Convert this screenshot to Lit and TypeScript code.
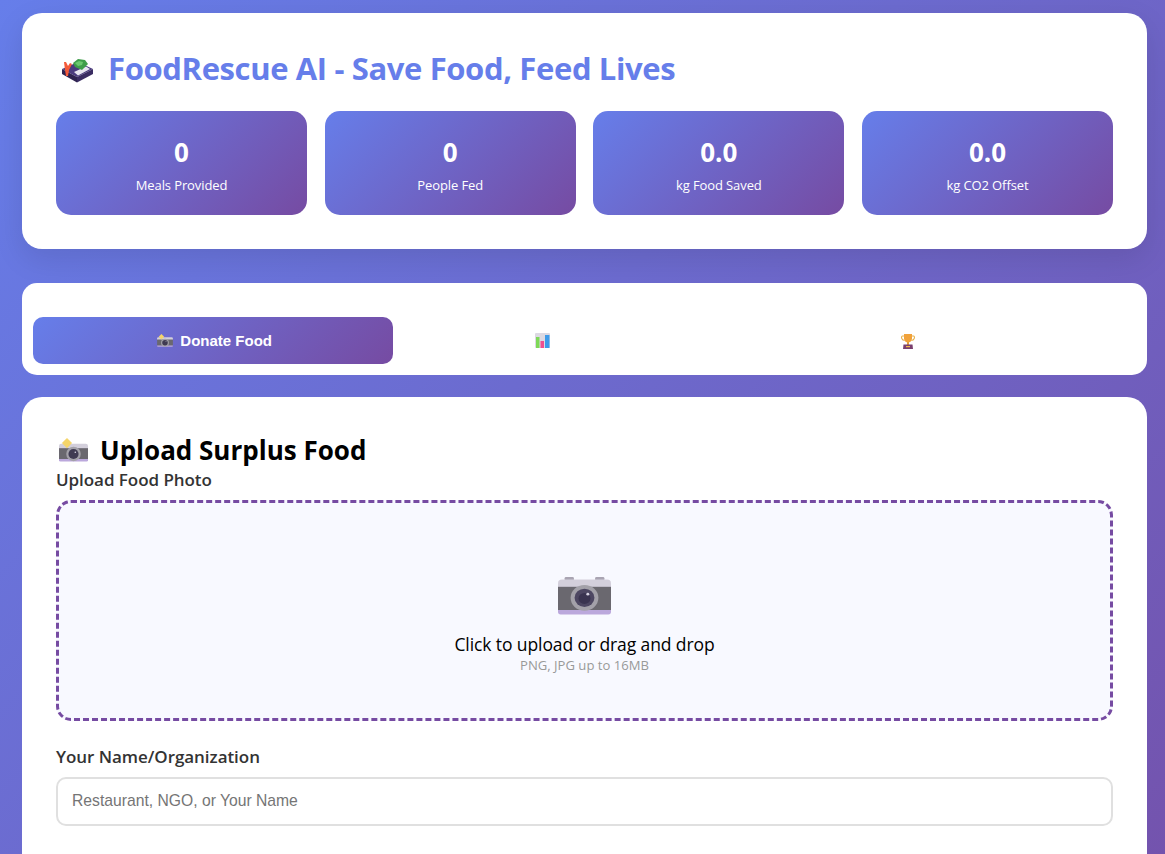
import { LitElement, html, css, svg } from 'lit';
import { customElement } from 'lit/decorators.js';

const bento = svg`
  <path d="M1 11L17 4l15 7-16 8z" fill="#4b3b7e"/>
  <path d="M1 11v5l15 8.500V19z" fill="#2f2350"/>
  <path d="M16 19v5.500L32 16v-5z" fill="#3a2c62"/>
  <path d="M13 14l12-5.500 4 2.500-12 6.500z" fill="#e8e6f0"/>
  <path d="M3 4h2l2 4 2-3 2 1-3 6-1 6H5l-1-6z" fill="#f45a3a"/>
  <path d="M12 5l5-4 7 1 3 4-6 6-7-3z" fill="#3f9e4a"/>
  <path d="M14 5l4-2 4 1-1 3-4 1z" fill="#6cc96f"/>`;

const camera = svg`
  <rect x="5" y="0" width="7" height="3" rx="1" fill="#a9a4b2"/>
  <rect x="28" y="0" width="7" height="3" rx="1" fill="#a9a4b2"/>
  <path d="M0 5a3 3 0 013-3h34a3 3 0 013 3v4H0z" fill="#d3cfdb"/>
  <rect y="8" width="40" height="20" fill="#6a686f"/>
  <path d="M0 27h40v1.500a2 2 0 01-2 2H2a2 2 0 01-2-2z" fill="#bba8dc"/>
  <circle cx="20" cy="17" r="10.500" fill="#a3a1a9"/>
  <circle cx="20" cy="17" r="7.500" fill="#4d4762"/>
  <circle cx="20" cy="17.500" r="4.500" fill="#3a3450"/>
  <circle cx="22.500" cy="14" r="1.100" fill="#d8d5e4"/>`;

// squatter body with the flash spark sticking out at the top left
const flashCamera = svg`
  <path d="M0 3a3 3 0 013-3h34a3 3 0 013 3v4H0z" fill="#d3cfdb"/>
  <rect y="6" width="40" height="16" fill="#6a686f"/>
  <path d="M0 21h40v1.500a2 2 0 01-2 2H2a2 2 0 01-2-2z" fill="#bba8dc"/>
  <circle cx="20" cy="14" r="10" fill="#a3a1a9"/>
  <circle cx="20" cy="14" r="7" fill="#3f3a52"/>
  <circle cx="22.500" cy="11.500" r="1.100" fill="#d8d5e4"/>
  <path d="M11-8l7 7-7 7-7-7z" fill="#f5d56a"/>`;

const chart = svg`
  <rect width="15" height="15" rx="1" fill="#dcd9e2"/>
  <rect x="1" y="4" width="3.500" height="11" fill="#7ed957"/>
  <rect x="5.500" y="8" width="3.500" height="7" fill="#ef4f8f"/>
  <rect x="10" y="2" width="4.500" height="13" fill="#3d9be9"/>`;

const trophy = svg`
  <path d="M2.500 3h11M2.500 3c-1.500 0-1.500 4 2 4.500M13.500 3c1.500 0 1.500 4-2 4.500" stroke="#e5b04a" stroke-width="1.100" fill="none"/>
  <path d="M4 1h8v4.500c0 2.500-2 4-4 4s-4-1.500-4-4z" fill="#f1a23a"/>
  <rect x="7" y="9" width="2" height="3" fill="#e0a03c"/>
  <path d="M3.500 11.500h9l.5 4.500H3z" fill="#7a3f6e"/>
  <rect x="6" y="13" width="4" height="1.200" fill="#f1b84a"/>`;

@customElement('app-root')
export class AppRoot extends LitElement {
  static styles = css`
    :host {
      display: block;
      min-height: 1240px;
      padding: 13px 18px 20px 22px;
      box-sizing: border-box;
      background: linear-gradient(135deg, #667eea 0%, #764ba2 100%);
      font-family: 'Open Sans', 'Noto Sans', sans-serif;
      color: #333;
    }
    .card {
      background: #fff;
      border-radius: 20px;
    }
    .header {
      padding: 34px;
      margin-bottom: 34px;
      height: 236px;
      box-sizing: border-box;
      box-shadow: 0 10px 30px rgba(0, 0, 0, 0.1);
    }
    .title {
      display: flex;
      align-items: center;
      gap: 14px;
      margin: 0 0 22px;
      height: 42px;
      font-size: 31px;
      font-weight: 700;
      letter-spacing: -0.37px;
      color: #667eea;
    }
    .title svg { margin: 6px 0 0 5px; }
    .stats {
      display: grid;
      grid-template-columns: repeat(4, 1fr);
      gap: 17.6px;
    }
    .stat {
      height: 104px;
      border-radius: 15px;
      background: linear-gradient(135deg, #667eea 0%, #764ba2 100%);
      color: #fff;
      text-align: center;
      padding-top: 23px;
      box-sizing: border-box;
    }
    .stat-value { font-size: 26px; font-weight: 700; line-height: 36px; }
    .stat-label { font-size: 13px; line-height: 18px; margin-top: 6px; letter-spacing: -0.1px; }
    .tabs {
      display: grid;
      grid-template-columns: repeat(3, 1fr);
      gap: 11px;
      padding: 34px 11px 11px;
      margin-bottom: 22px;
      border-radius: 15px;
    }
    .tab {
      height: 47px;
      border: none;
      border-radius: 10px;
      background: transparent;
      color: #fff;
      font-family: 'Liberation Sans', Arial, sans-serif;
      font-size: 15px;
      font-weight: 700;
      display: flex;
      align-items: center;
      justify-content: center;
      gap: 7px;
      padding: 0 0 0 3px;
    }
    .tab.active { background: linear-gradient(135deg, #667eea 0%, #764ba2 100%); }
    .panel { padding: 34px; }
    h2 {
      display: flex;
      align-items: center;
      gap: 12px;
      margin: 0;
      height: 38px;
      font-size: 26px;
      font-weight: 700;
      color: #000;
    }
    h2 svg { margin-left: 3px; }
    label {
      display: block;
      font-size: 17px;
      font-weight: 600;
      line-height: 22px;
      color: #333;
      letter-spacing: -0.05px;
    }
    .drop {
      margin-top: 9px;
      height: 221px;
      box-sizing: border-box;
      border: 3px dashed #764ba2;
      border-radius: 15px;
      background: #f8f9ff;
      display: flex;
      flex-direction: column;
      align-items: center;
      padding-top: 74px;
    }
    .drop-title { font-size: 17.5px; line-height: 24px; color: #000; margin-top: 17px; letter-spacing: -0.1px; }
    .drop-hint { font-size: 13.100px; line-height: 18px; color: #999; }
    .field { margin-top: 25px; }
    input {
      display: block;
      width: 100%;
      height: 49px;
      margin-top: 9px;
      box-sizing: border-box;
      padding: 0 14px 2px;
      border: 2px solid #e0e0e0;
      border-radius: 10px;
      font-family: 'Liberation Sans', Arial, sans-serif;
      font-size: 15.700px;
      background: #fff;
    }
    input::placeholder { color: #757575; }
  `;

  render() {
    const stats: [string, string][] = [
      ['0', 'Meals Provided'],
      ['0', 'People Fed'],
      ['0.0', 'kg Food Saved'],
      ['0.0', 'kg CO2 Offset'],
    ];
    return html`
      <div class="card header">
        <div class="title">
          <svg width="33" height="26" viewBox="0 0 33 26">${bento}</svg>
          FoodRescue AI - Save Food, Feed Lives
        </div>
        <div class="stats">
          ${stats.map(([value, label]) => html`
            <div class="stat">
              <div class="stat-value">${value}</div>
              <div class="stat-label">${label}</div>
            </div>
          `)}
        </div>
      </div>
      <div class="card tabs">
        <button class="tab active">
          <svg width="16" height="13" viewBox="0 -8 40 33">${flashCamera}</svg>
          Donate Food
        </button>
        <button class="tab">
          <svg width="16" height="16" viewBox="0 0 16 16">${chart}</svg>
          Dashboard
        </button>
        <button class="tab">
          <svg width="16" height="16" viewBox="0 0 16 16">${trophy}</svg>
          Leaderboard
        </button>
      </div>
      <div class="card panel">
        <h2>
          <svg width="29" height="24" viewBox="0 -8 40 33">${flashCamera}</svg>
          Upload Surplus Food
        </h2>
        <label>Upload Food Photo</label>
        <div class="drop">
          <svg width="53" height="38" viewBox="0 0 40 31" preserveAspectRatio="none">${camera}</svg>
          <div class="drop-title">Click to upload or drag and drop</div>
          <div class="drop-hint">PNG, JPG up to 16MB</div>
        </div>
        <div class="field">
          <label>Your Name/Organization</label>
          <input placeholder="Restaurant, NGO, or Your Name" />
        </div>
        <div class="field">
          <label>Location for Pickup</label>
          <input />
        </div>
      </div>
    `;
  }
}
